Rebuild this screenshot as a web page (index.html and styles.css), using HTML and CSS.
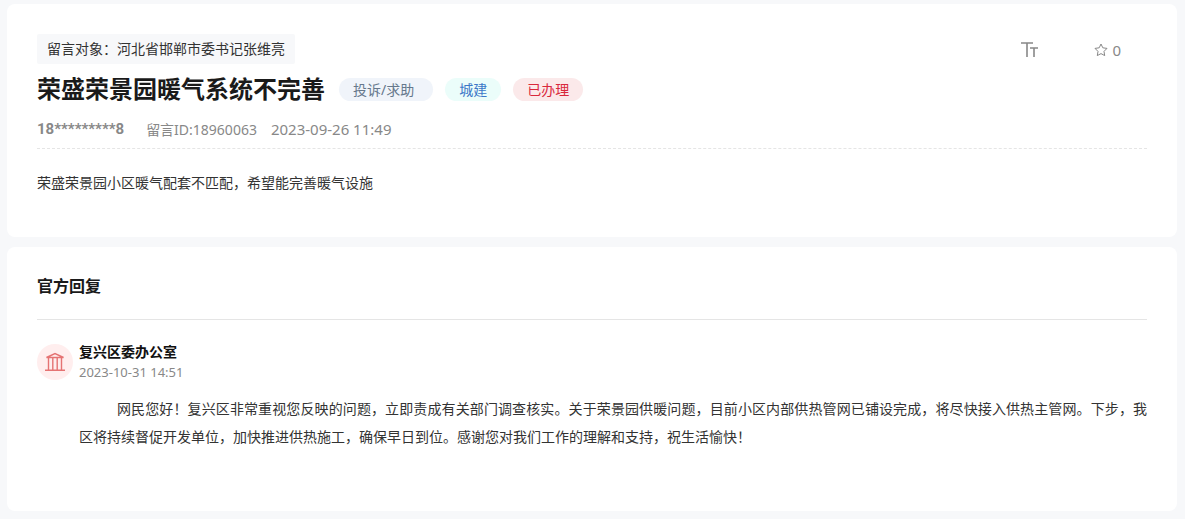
FILE: index.html
```html
<!DOCTYPE html>
<html lang="zh-CN">
<head>
  <meta charset="UTF-8" />
  <meta name="viewport" content="width=device-width, initial-scale=1.0"/>
  <title>荣盛荣景园暖气系统不完善</title>
  <link rel="stylesheet" href="styles.css">
</head>
<body>
  <main class="page">
    <article class="card message">
      <div class="message-top">
        <p class="target">留言对象：河北省邯郸市委书记张维亮</p>
        <div class="tools">
          <button class="tool" type="button" aria-label="字号">
            <svg width="17" height="16" viewBox="0 0 17 16" fill="none" stroke="currentColor" stroke-width="1.6">
              <path d="M0 1H12M6 1V15M9 6H17M13 6V15"/>
            </svg>
          </button>
          <button class="tool" type="button" aria-label="收藏">
            <svg width="14" height="14" viewBox="0 0 14 14" fill="none" stroke="currentColor" stroke-linejoin="round">
              <path d="M7 1L8.8 4.8L13 5.4L10 8.4L10.7 12.6L7 10.6L3.3 12.6L4 8.4L1 5.4L5.2 4.8Z"/>
            </svg>
            <span>0</span>
          </button>
        </div>
      </div>
      <div class="title-row">
        <h1>荣盛荣景园暖气系统不完善</h1>
        <span class="tag tag-type">投诉/求助</span>
        <span class="tag tag-field">城建</span>
        <span class="tag tag-state">已办理</span>
      </div>
      <div class="meta">
        <span class="user">18*********8</span>
        <span class="id">留言ID:18960063</span>
        <time>2023-09-26 11:49</time>
      </div>
      <p class="content">荣盛荣景园小区暖气配套不匹配，希望能完善暖气设施</p>
    </article>

    <section class="card reply">
      <h2>官方回复</h2>
      <div class="reply-item">
        <div class="avatar">
          <svg width="20" height="20" viewBox="0 0 20 20" fill="none" stroke="currentColor" stroke-width="1.4">
            <path d="M1.5 5.5L10 1.5L18.5 5.5ZM3.5 6V18M7.8 6V18M12.2 6V18M16.5 6V18M0 18.3H20"/>
          </svg>
        </div>
        <div class="reply-body">
          <h3>复兴区委办公室</h3>
          <time>2023-10-31 14:51</time>
          <p>网民您好！复兴区非常重视您反映的问题，立即责成有关部门调查核实。关于荣景园供暖问题，目前小区内部供热管网已铺设完成，将尽快接入供热主管网。下步，我区将持续督促开发单位，加快推进供热施工，确保早日到位。感谢您对我们工作的理解和支持，祝生活愉快！</p>
        </div>
      </div>
    </section>
  </main>
</body>
</html>
```

FILE: styles.css
```css
* {
  box-sizing: border-box;
}
body {
  margin: 0;
  background-color: #f7f8fa;
  font-family: "Noto Sans", "Noto Sans CJK SC", sans-serif;
  font-size: 14px;
  color: #333;
}
h1, h2, h3, p {
  margin: 0;
}
.page {
  display: flex;
  flex-direction: column;
  gap: 10px;
  padding: 4px 8px 8px 7px;
}
.card {
  background-color: #fff;
  border-radius: 8px;
  padding: 30px;
}
.message {
  padding-bottom: 40px;
}
.message-top {
  display: flex;
  justify-content: space-between;
}
.target {
  padding: 0 10px;
  line-height: 30px;
  background-color: #f7f8fa;
  border-radius: 2px;
}
.tools {
  display: flex;
  gap: 56px;
  padding: 2px 26px 0 0;
}
.tool {
  display: flex;
  align-items: center;
  gap: 4px;
  padding: 0;
  border: 0;
  background: none;
  color: #888;
  font-family: inherit;
  font-size: 15px;
  cursor: pointer;
}
.title-row {
  display: flex;
  align-items: center;
  margin-top: 8px;
}
h1 {
  margin-right: 14px;
  font-size: 24px;
  line-height: 34px;
  color: #1a1a1a;
}
.tag {
  margin-right: 12px;
  padding: 0 14px;
  border-radius: 12px;
  line-height: 23px;
}
.tag-type {
  padding-right: 19px;
  background-color: #f0f4fa;
  color: #66788c;
}
.tag-field {
  background-color: #ebfdfa;
  color: #3c78c8;
}
.tag-state {
  background-color: #fbe9ea;
  color: #d9283c;
}
.meta {
  display: flex;
  margin-top: 12px;
  padding-bottom: 7px;
  border-bottom: 1px dashed #e5e5e5;
  line-height: 23px;
  color: #888;
}
.user {
  margin-right: 22px;
  font-family: Roboto, sans-serif;
  font-size: 15px;
  font-weight: bold;
}
.id {
  margin-right: 14px;
}
.meta time {
  font-size: 15px;
}
.content {
  margin-top: 20px;
  line-height: 28px;
}
.reply {
  padding-bottom: 60px;
}
h2 {
  padding-bottom: 23px;
  border-bottom: 1px solid #e5e5e5;
  font-size: 16px;
  line-height: 19px;
  color: #1a1a1a;
}
.reply-item {
  display: flex;
  gap: 6px;
  margin-top: 24px;
}
.avatar {
  display: flex;
  flex: none;
  align-items: center;
  justify-content: center;
  width: 36px;
  height: 36px;
  border-radius: 50%;
  background-color: #ffeeee;
  color: #e57373;
}
.reply-body {
  flex: 1;
}
h3 {
  font-size: 14px;
  line-height: 16px;
  color: #111;
}
.reply-body time {
  display: block;
  font-size: 13px;
  line-height: 24px;
  color: #888;
}
.reply-body p {
  margin-top: 11px;
  line-height: 28px;
  text-indent: 38px;
  text-align: justify;
}
```
